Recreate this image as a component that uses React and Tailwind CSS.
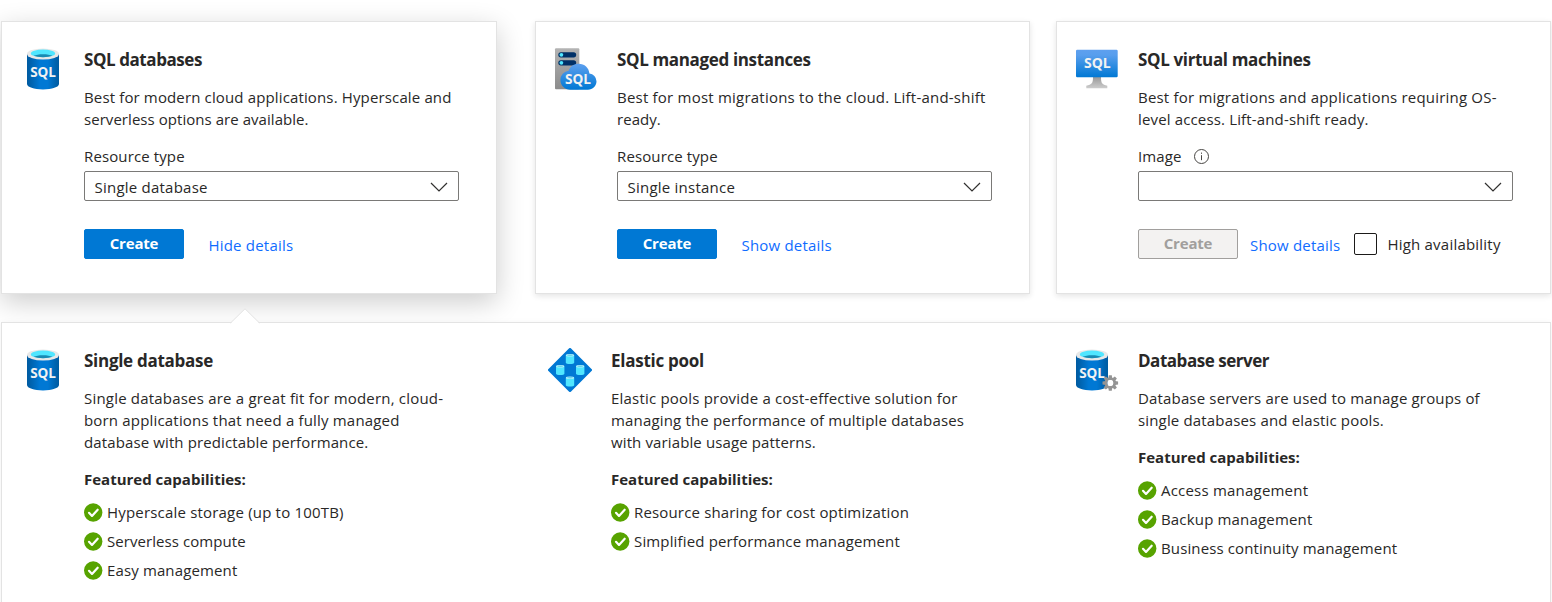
import React from "react";

function SqlLabel({ x, y, width, size }) {
  return (
    <text x={x} y={y} textLength={width} lengthAdjust="spacingAndGlyphs" fontSize={size} fontWeight="700" fill="#f2f2f2" fontFamily="'Open Sans', sans-serif">
      SQL
    </text>
  );
}

function Cylinder({ id, shift }) {
  return (
    <g transform={`translate(${shift} 0)`}>
      <defs>
        <linearGradient id={id} x1="0" x2="1" y1="0" y2="0">
          <stop offset="0" stopColor="#005ba1" />
          <stop offset="0.12" stopColor="#0062ad" />
          <stop offset="0.4" stopColor="#0078d4" />
          <stop offset="0.65" stopColor="#0078d4" />
          <stop offset="0.9" stopColor="#0062ad" />
          <stop offset="1" stopColor="#005ba1" />
        </linearGradient>
      </defs>
      <path d="M6 7v30.100c0 3.100 7.100 5.300 16 5.300s16-2.200 16-5.300V7z" fill={`url(#${id})`} />
      <ellipse cx="22" cy="7" rx="16" ry="5.6" fill="#e8e8e8" />
      <ellipse cx="22" cy="6.4" rx="12.2" ry="3.8" fill="#50e6ff" />
      <path d="M12.6 8.8C14.800 7.800 18 7.200 22 7.200s7.200.6 9.400 1.600C29.200 9.700 26 10.200 22 10.200s-7.200-.5-9.400-1.400z" fill="#198ab3" />
      <SqlLabel x={9.2} y={29.9} width={25.8} size={14.2} />
    </g>
  );
}

function DatabaseIcon({ id }) {
  return (
    <svg className="block size-11" viewBox="0 0 44 44">
      <Cylinder id={id} shift={0} />
    </svg>
  );
}

function ServerIcon() {
  const teeth = [0, 45, 90, 135, 180, 225, 270, 315];
  return (
    <svg className="block size-11" viewBox="0 0 44 44">
      <Cylinder id="db-server" shift={-5} />
      <g transform="translate(35.3 35)" fill="#949494">
        {teeth.map((a) => (
          <path key={a} d="M-1.900-4.500L-1.500-7.800H1.500L1.900-4.500z" transform={`rotate(${a})`} />
        ))}
        <circle r="4.300" fill="none" stroke="#949494" strokeWidth="2.800" />
        <circle r="2.900" fill="#fff" />
      </g>
    </svg>
  );
}

function ManagedInstanceIcon() {
  return (
    <svg className="block size-11" viewBox="0 0 44 44">
      <defs>
        <linearGradient id="mi-rack" x1="0" x2="0" y1="0" y2="1">
          <stop offset="0" stopColor="#b3b3b3" />
          <stop offset="1" stopColor="#8c8c8c" />
        </linearGradient>
        <linearGradient id="mi-cloud" x1="0" x2="0" y1="0" y2="1">
          <stop offset="0" stopColor="#5ea0ef" />
          <stop offset="1" stopColor="#0078d4" />
        </linearGradient>
      </defs>
      <rect x="1" y="1.300" width="24.300" height="41" rx="1" fill="url(#mi-rack)" />
      <rect x="4.300" y="5.200" width="17.900" height="5.200" rx="2.600" fill="#003067" />
      <rect x="4.300" y="13.200" width="17.900" height="5.200" rx="2.600" fill="#003067" />
      <circle cx="7.400" cy="7.800" r="1.900" fill="#50e6ff" />
      <circle cx="7.400" cy="15.800" r="1.900" fill="#50e6ff" />
      <path
        d="M42.500 34.300a8.200 8.200 0 0 0-7.100-7.900c-.4-5.500-4.900-9.700-10.700-9.700-4.700 0-8.500 2.600-10.100 7a9.300 9.300 0 0 0-8.200 9.300c0 5.300 4.200 9.700 9.900 9.700h17.600c4.800 0 8.600-3.700 8.600-8.400z"
        fill="url(#mi-cloud)"
      />
      <SqlLabel x={11} y={37.1} width={26} size={14} />
    </svg>
  );
}

function VirtualMachineIcon() {
  return (
    <svg className="block size-11" viewBox="0 0 44 44">
      <defs>
        <linearGradient id="vm-screen" x1="0" x2="0" y1="0" y2="1">
          <stop offset="0" stopColor="#5ea0ef" />
          <stop offset="0.2" stopColor="#589eed" />
          <stop offset="1" stopColor="#0078d4" />
        </linearGradient>
        <linearGradient id="vm-stand" x1="0" x2="0" y1="0" y2="1">
          <stop offset="0" stopColor="#999" />
          <stop offset="1" stopColor="#ccc" />
        </linearGradient>
      </defs>
      <path d="M18 30h8c0 6.300 1 7.500 6.300 8.700v2.500H11.300v-2.500C16.900 37.500 18 36.300 18 30z" fill="url(#vm-stand)" />
      <rect x="1" y="2.700" width="41.700" height="27.500" rx="1.200" fill="url(#vm-screen)" />
      <SqlLabel x={9} y={21.4} width={26.7} size={14.3} />
    </svg>
  );
}

function ElasticPoolIcon() {
  const cells = [
    [17.800, 6],
    [8, 17],
    [28, 17],
    [17.800, 28.500],
  ];
  return (
    <svg className="block size-11" viewBox="0 0 44 44">
      <path d="M20.900.5a1.500 1.500 0 0 1 2.200 0l20.400 20.400a1.500 1.500 0 0 1 0 2.200L23.100 43.500a1.500 1.500 0 0 1-2.200 0L.5 23.100a1.500 1.500 0 0 1 0-2.200z" fill="#0078d4" />
      {cells.map(([x, y]) => (
        <g key={`${x}-${y}`} transform={`translate(${x} ${y})`}>
          <path d="M0 1.400v7.300c0 .9 1.900 1.300 4.200 1.300s4.200-.4 4.200-1.300V1.400z" fill="#50e6ff" />
          <ellipse cx="4.200" cy="1.300" rx="4.200" ry="1.200" fill="#b9effa" />
          <ellipse cx="4.200" cy="1.300" rx="3" ry=".7" fill="#62d6ec" />
        </g>
      ))}
    </svg>
  );
}

function CheckIcon() {
  return (
    <svg className="block size-[19px] shrink-0" viewBox="0 0 19 19">
      <circle cx="9.200" cy="9.500" r="9.200" fill="#57a300" />
      <path d="M5 9.800l3 3.100 5.700-6.200" fill="none" stroke="#fff" strokeWidth="2.200" strokeLinecap="round" strokeLinejoin="round" />
    </svg>
  );
}

function Heading({ children, tracking = "tracking-[-0.35px]" }) {
  return <h2 className={`h-[22px] text-[17px] leading-[22px] font-bold whitespace-nowrap ${tracking}`}>{children}</h2>;
}

function Paragraph({ lines }) {
  return (
    <p className="mt-[15px] text-[15px] leading-[22px] whitespace-nowrap">
      {lines.map(([line, tracking]) => (
        <span key={line} className={`block ${tracking}`}>
          {line}
        </span>
      ))}
    </p>
  );
}

function Select({ value }) {
  return (
    <div className="mt-1 flex h-[30px] w-[375px] items-center justify-between rounded-[2px] border border-[#7a7977] bg-white pr-[10px] pl-[9.500px]">
      <span className="pt-px tracking-[0.23px]">{value}</span>
      <svg className="mt-[2px] block h-[10px] w-[18px]" viewBox="0 0 18 10" fill="none" stroke="#323130" strokeWidth="1.200">
        <path d="M1 1l8 8 8-8" />
      </svg>
    </div>
  );
}

function Card({ icon, title, titleTracking, lines, label, info, value, link, disabled, raised, className }) {
  const shadow = raised
    ? "shadow-[0_8px_26px_rgba(0,0,0,0.2)]"
    : "shadow-[0_2px_6px_rgba(0,0,0,0.11)]";
  return (
    <section className={`flex h-[273px] shrink-0 gap-[19px] border border-[#e3e3e3] bg-white pt-[25px] ${shadow} ${className}`}>
      <div className="size-11 shrink-0">{icon}</div>
      <div className="pt-[2px]">
        <Heading tracking={titleTracking}>{title}</Heading>
        <Paragraph lines={lines} />
        <div className="mt-[15px] flex h-[22px] items-center gap-3 tracking-[0.12px]">
          <span>{label}</span>
          {info && (
            <svg className="ml-[0.500px] block size-[15px]" viewBox="0 0 15 15" fill="none" stroke="#484644" strokeWidth="1">
              <circle cx="7.500" cy="7.500" r="7" />
              <path d="M7.500 6.200v5M7.500 3.600v1.200" />
            </svg>
          )}
        </div>
        <Select value={value} />
        <div className="mt-7 flex h-[30px] items-center whitespace-nowrap">
          <button
            className={
              disabled
                ? "h-[30px] w-[100px] rounded-[2px] border border-[#a19f9d] bg-[#f3f2f1] pb-[2px] font-bold tracking-[-0.2px] text-[#a19f9d]"
                : "h-[30px] w-[100px] rounded-[2px] border border-[#0078d4] bg-[#0078d4] pb-[2px] font-bold tracking-[-0.2px] text-white"
            }
          >
            Create
          </button>
          <a className={disabled ? "ml-3 pt-[2px] tracking-[0.2px] text-[#0f6cff]" : "ml-[24.500px] pt-[2px] tracking-[0.2px] text-[#0f6cff]"}>{link}</a>
          {disabled && (
            <label className="ml-[14px] flex items-center gap-[10px] tracking-[0.22px]">
              <span className="block h-[22px] w-[23px] rounded-[2px] border border-[#1b1a19] bg-white" />
              High availability
            </label>
          )}
        </div>
      </div>
    </section>
  );
}

function Detail({ icon, title, titleTracking, lines, features }) {
  return (
    <section className="flex w-[527px] shrink-0 gap-[19px]">
      <div className="size-11 shrink-0">{icon}</div>
      <div className="pt-[2px]">
        <Heading tracking={titleTracking}>{title}</Heading>
        <Paragraph lines={lines} />
        <h3 className="mt-[15px] leading-[22px] font-bold">Featured capabilities:</h3>
        <ul className="mt-[8px]">
          {features.map(([f, tracking]) => (
            <li key={f} className="flex h-[29px] items-center gap-1 whitespace-nowrap">
              <CheckIcon />
              <span className={`pb-[2px] ${tracking}`}>{f}</span>
            </li>
          ))}
        </ul>
      </div>
    </section>
  );
}

export default function App() {
  return (
    <main className="flex h-[602px] w-[1552px] flex-col overflow-hidden bg-white pt-[21px] pl-px font-['Open_Sans',sans-serif] text-[15px] leading-[22px] text-[#292827]">
      <div className="flex">
        <Card
          className="mr-[38px] w-[496px] pl-[19px]"
          raised
          icon={<DatabaseIcon id="db-card" />}
          title="SQL databases"
          titleTracking="tracking-[-0.43px]"
          lines={[
            ["Best for modern cloud applications. Hyperscale and", "tracking-[0.14px]"],
            ["serverless options are available.", "tracking-[0.05px]"],
          ]}
          label="Resource type"
          value="Single database"
          link="Hide details"
        />
        <Card
          className="mr-[26px] w-[495px] pl-[18px]"
          icon={<ManagedInstanceIcon />}
          title="SQL managed instances"
          lines={[
            ["Best for most migrations to the cloud. Lift-and-shift", "tracking-[0.22px]"],
            ["ready.", "tracking-[0.05px]"],
          ]}
          label="Resource type"
          value="Single instance"
          link="Show details"
        />
        <Card
          className="w-[495px] pl-[18px]"
          icon={<VirtualMachineIcon />}
          title="SQL virtual machines"
          lines={[
            ["Best for migrations and applications requiring OS-", "tracking-[0.2px]"],
            ["level access. Lift-and-shift ready.", "tracking-[0.15px]"],
          ]}
          label="Image"
          info
          value=""
          link="Show details"
          disabled
        />
      </div>
      <div className="relative mt-7 flex h-[300px] w-[1550px] shrink-0 border border-[#e3e3e3] bg-white pt-[25px] pl-[19px] shadow-[0_1px_6px_rgba(0,0,0,0.06)]">
        <svg className="absolute -top-[15px] left-[228px] h-[16px] w-[30px]" viewBox="0 0 30 16">
          <path d="M0 16L15 1l15 15z" fill="#fff" />
          <path d="M.5 15L15 .8l14.500 14.200" fill="none" stroke="#e3e3e3" />
        </svg>
        <Detail
          icon={<DatabaseIcon id="db-detail" />}
          title="Single database"
          titleTracking="tracking-[-0.28px]"
          lines={[
            ["Single databases are a great fit for modern, cloud-", "tracking-[0.2px]"],
            ["born applications that need a fully managed", "tracking-[0.18px]"],
            ["database with predictable performance.", "tracking-[0.12px]"],
          ]}
          features={[
            ["Hyperscale storage (up to 100TB)", "tracking-[0.19px]"],
            ["Serverless compute", "tracking-[0.07px]"],
            ["Easy management", "tracking-[0.13px]"],
          ]}
        />
        <Detail
          icon={<ElasticPoolIcon />}
          title="Elastic pool"
          titleTracking="tracking-[-0.26px]"
          lines={[
            ["Elastic pools provide a cost-effective solution for", "tracking-[0.2px]"],
            ["managing the performance of multiple databases", "tracking-[0.17px]"],
            ["with variable usage patterns.", "tracking-[0.12px]"],
          ]}
          features={[
            ["Resource sharing for cost optimization", "tracking-[0.16px]"],
            ["Simplified performance management", "tracking-[0.15px]"],
          ]}
        />
        <Detail
          icon={<ServerIcon />}
          title="Database server"
          titleTracking="tracking-[-0.47px]"
          lines={[
            ["Database servers are used to manage groups of", "tracking-[0.16px]"],
            ["single databases and elastic pools.", "tracking-[0.16px]"],
          ]}
          features={[
            ["Access management", "tracking-[0.21px]"],
            ["Backup management", "tracking-[0.17px]"],
            ["Business continuity management", "tracking-[0.13px]"],
          ]}
        />
      </div>
    </main>
  );
}
